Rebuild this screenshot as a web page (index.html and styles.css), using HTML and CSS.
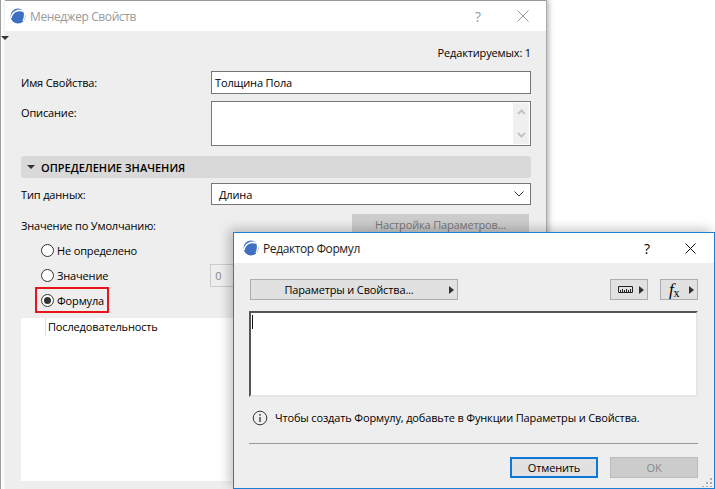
FILE: index.html
```html
<!DOCTYPE html>
<html lang="ru">
<head>
<meta charset="utf-8">
<title>Менеджер Свойств</title>
<link rel="stylesheet" href="styles.css">
</head>
<body>
<div class="desk-line"></div>
<div class="desk-mark"></div>
<section class="win win-back">
  <header class="titlebar">
    <svg class="logo" width="16" height="16" viewBox="0 0 16 16"><circle cx="8" cy="8" r="7.5" fill="#3f6fc0"/><path d="M1 10C2 4 8 0.5 14 3.5" fill="none" stroke="#fff" stroke-width="1.6"/><path d="M14 3.5C15 6 14.5 10 13 13" fill="none" stroke="#fff" stroke-width="1.4"/></svg>
    <span class="title title-dim">Менеджер Свойств</span>
    <span class="help help-back dim">?</span>
    <svg class="close close-back" width="12" height="12" viewBox="0 0 12 12"><path d="M.5.5l11 11M11.5.5l-11 11" stroke="#999" fill="none"/></svg>
  </header>
  <div class="back-body">
    <div class="editable">Редактируемых: 1</div>
    <div class="row row-name"><label class="lbl">Имя Свойства:</label><div class="field">Толщина Пола</div></div>
    <div class="row row-desc"><label class="lbl">Описание:</label>
      <div class="field field-area"><div class="scroll">
        <svg width="9" height="6" viewBox="0 0 9 6"><path d="M1 5l3.5-3.5L8 5" fill="none" stroke="#c4c4c4" stroke-width="2"/></svg>
        <svg width="9" height="6" viewBox="0 0 9 6"><path d="M1 1l3.5 3.5L8 1" fill="none" stroke="#c4c4c4" stroke-width="2"/></svg>
      </div></div>
    </div>
    <div class="section"><span class="tri-down"></span>ОПРЕДЕЛЕНИЕ ЗНАЧЕНИЯ</div>
    <div class="row row-type"><label class="lbl">Тип данных:</label>
      <div class="field field-select">Длина<svg width="10" height="6" viewBox="0 0 10 6"><path d="M.5.5L5 5 9.500.5" fill="none" stroke="#333"/></svg></div>
    </div>
    <div class="row row-default"><label class="lbl">Значение по Умолчанию:</label><div class="btn-disabled">Настройка Параметров...</div></div>
    <div class="radio-row radio-first"><span class="radio"></span>Не определено</div>
    <div class="radio-row radio-value"><span class="radio"></span>Значение<div class="zero">0</div></div>
    <div class="radio-row radio-formula"><span class="radio on"></span>Формула</div>
    <div class="panel"><div class="cell">Последовательность</div></div>
  </div>
</section>

<section class="win win-front">
  <header class="titlebar titlebar-front">
    <svg class="logo" width="16" height="16" viewBox="0 0 16 16"><circle cx="8" cy="8" r="7.5" fill="#3f6fc0"/><path d="M1 10C2 4 8 0.5 14 3.5" fill="none" stroke="#fff" stroke-width="1.6"/><path d="M14 3.500C15 6 14.500 10 13 13" fill="none" stroke="#fff" stroke-width="1.4"/></svg>
    <span class="title">Редактор Формул</span>
    <span class="help help-front">?</span>
    <svg class="close close-front" width="11" height="11" viewBox="0 0 11 11"><path d="M.5.5l10 10M10.500.5l-10 10" stroke="#111" fill="none"/></svg>
  </header>
  <div class="front-body">
    <div class="toolbar">
      <div class="tool tool-main"><span class="tool-text">Параметры и Свойства...</span><span class="tri-right"></span></div>
      <div class="tool tool-small tool-ruler">
        <svg width="15" height="7" viewBox="0 0 15 7"><path d="M.5.500h14v6H.5z" fill="none" stroke="#222"/><path d="M2.500 4v3M4.500 3v3M6.500 4v3M8.500 3v3M10.500 4v3M12.500 3v3" stroke="#222"/></svg>
        <span class="tri-right"></span></div>
      <div class="tool tool-small"><span class="fx">f<sub>x</sub></span><span class="tri-right"></span></div>
    </div>
    <div class="editor"><span class="caret"></span></div>
    <div class="info">
      <svg width="16" height="16" viewBox="0 0 16 16"><circle cx="8" cy="8" r="6.800" fill="none" stroke="#333"/><path d="M8 7v5" stroke="#333" stroke-width="1.300"/><circle cx="8" cy="4.800" r=".9" fill="#333"/></svg>
      <span class="info-text">Чтобы создать Формулу, добавьте в Функции Параметры и Свойства.</span>
    </div>
    <div class="sep"></div>
    <div class="actions">
      <div class="act act-primary">Отменить</div>
      <div class="act act-off">OK</div>
    </div>
  </div>
  <svg class="grip" width="11" height="11" viewBox="0 0 11 11"><path d="M8 2h2v2H8zM4 6h2v2H4zM8 6h2v2H8zM0 10h2v1H0zM4 10h2v1H4zM8 10h2v1H8z" fill="#aaa"/></svg>
</section>
</body>
</html>
```

FILE: styles.css
```css
* { box-sizing: border-box; }
html, body { margin: 0; height: 100%; }
body {
  position: relative;
  width: 715px;
  height: 489px;
  overflow: hidden;
  background: #fff;
  font-family: "Open Sans", "Noto Sans", sans-serif;
  font-size: 11px;
  letter-spacing: -.15px;
  color: #000;
}
.desk-line {
  position: absolute;
  left: 0;
  top: 0;
  width: 1px;
  height: 489px;
  background: #a0a0a0;
}
.desk-mark {
  position: absolute;
  left: 1px;
  top: 36px;
  border-left: 4px solid transparent;
  border-right: 4px solid transparent;
  border-top: 4px solid #333;
  z-index: 1;
}
.win { position: absolute; background: #eee; }
.win-back {
  left: 5px;
  top: 0;
  width: 542px;
  height: 489px;
  border-top: 1px solid #999;
  border-right: 1px solid #aaa;
  box-shadow: 2px 0 5px rgba(0,0,0,.28);
}
.win-front {
  left: 233px;
  top: 232px;
  width: 482px;
  height: 257px;
  border: 1px solid #1c7fd6;
  box-shadow: -4px -3px 10px rgba(0,0,0,.22);
}
.titlebar {
  display: flex;
  align-items: center;
  height: 30px;
  background: #fff;
  padding-left: 5px;
}
.titlebar-front { padding-left: 9px; }
.title { margin-left: 4px; font-size: 12px; letter-spacing: -.4px; flex: 1; color: #222; }
.title-dim { color: #999; }
.help { font-size: 14px; }
.help-back { margin-right: 36px; }
.help-front { margin-right: 35px; }
.dim { color: #999; }
.close-back { margin-right: 17px; }
.close-front { margin-right: 18px; }
.back-body { padding: 0 15px 0 16px; height: 458px; }
.editable { text-align: right; height: 40px; padding-top: 14px; line-height: 16px; }
.row { display: flex; }
.lbl { width: 190px; flex: none; }
.field {
  flex: 1;
  height: 23px;
  background: #fff;
  border: 1px solid #777;
  padding-left: 3px;
  line-height: 21px;
}
.row-name .lbl { line-height: 23px; }
.row-desc { margin-top: 7px; }
.row-desc .lbl { line-height: 16px; margin-top: 4px; }
.field-area { height: 45px; position: relative; }
.scroll {
  position: absolute;
  right: 1px;
  top: 1px;
  bottom: 1px;
  width: 16px;
  background: #f0f0f0;
  display: flex;
  flex-direction: column;
  justify-content: space-between;
  align-items: center;
  padding: 6px 0 6px;
}
.section {
  display: flex;
  align-items: center;
  height: 22px;
  margin-top: 10px;
  background: #d9d9d9;
  border-radius: 3px;
  font-weight: 600;
  letter-spacing: 0;
  padding-left: 6px;
}
.tri-down {
  border-left: 4px solid transparent;
  border-right: 4px solid transparent;
  border-top: 4px solid #333;
  margin-right: 6px;
}
.row-type { margin-top: 5px; align-items: center; }
.field-select {
  display: flex;
  justify-content: space-between;
  align-items: center;
  height: 22px;
  padding: 0 6px 0 7px;
}
.row-default { margin-top: 9px; height: 22px; align-items: center; }
.btn-disabled {
  margin-left: 141px;
  width: 177px;
  height: 22px;
  background: #ccc;
  color: #777;
  text-align: center;
  line-height: 22px;
}
.radio-row { display: flex; align-items: center; height: 25px; margin-left: 20px; }
.radio-first { margin-top: 2px; }
.radio {
  width: 13px;
  height: 13px;
  border-radius: 50%;
  border: 1px solid #333;
  background: #fff;
  margin-right: 3px;
  display: flex;
  align-items: center;
  justify-content: center;
  flex: none;
}
.radio.on::after { content: ""; width: 7px; height: 7px; background: #333; border-radius: 50%; }
.zero {
  margin-left: 102px;
  width: 40px;
  height: 23px;
  padding-left: 4px;
  line-height: 21px;
  border: 1px solid #ccc;
  color: #888;
}
.radio-formula {
  width: 74px;
  height: 26px;
  margin-left: 14px;
  margin-top: -1px;
  padding-left: 4px;
  border: 2px solid #e8141c;
}
.panel { background: #fff; height: 163px; margin-top: 5px; }
.cell {
  margin-left: 24px;
  border-left: 1px solid #ddd;
  height: 18px;
  padding-left: 2px;
  line-height: 18px;
}
.front-body { height: 225px; padding: 16px 16px 0; }
.toolbar { display: flex; }
.tool {
  display: flex;
  align-items: center;
  height: 21px;
  background: #e1e1e1;
  border: 1px solid #adadad;
}
.tool-main { width: 208px; padding-right: 3px; }
.tool-text { flex: 1; text-align: center; padding-right: 2px; }
.tool-ruler { margin-left: 152px; margin-right: 12px; }
.tool-small { width: 38px; padding: 0 3px 0 7px; justify-content: space-between; }
.tri-right {
  border-top: 4px solid transparent;
  border-bottom: 4px solid transparent;
  border-left: 5px solid #333;
}
.fx { font-family: "Liberation Serif", serif; font-style: italic; font-size: 17px; line-height: 16px; margin-left: 1px; }
.fx sub { font-size: 12px; font-style: normal; line-height: 0; vertical-align: -2px; }
.editor {
  height: 86px;
  margin-top: 11px;
  margin-left: -1px;
  background: #fff;
  border: 2px solid #e6e6e6;
  border-top-color: #555;
  border-left-color: #555;
  padding: 2px 0 0 1px;
}
.caret { display: block; width: 1px; height: 14px; background: #111; }
.info { display: flex; align-items: center; height: 16px; margin-top: 13px; padding-left: 2px; gap: 7px; }
.info-text { padding-bottom: 2px; }
.sep { height: 1px; background: #999; margin-top: 17px; margin-left: -1px; }
.actions { display: flex; justify-content: flex-end; gap: 12px; margin-top: 13px; }
.act { width: 88px; height: 21px; text-align: center; line-height: 19px; }
.act-primary { background: #e1e1e1; border: 2px solid #0a78d7; line-height: 17px; }
.act-off { background: #ccc; color: #888; border: 1px solid #bbb; }
.grip { position: absolute; right: 1px; bottom: 1px; }
```
